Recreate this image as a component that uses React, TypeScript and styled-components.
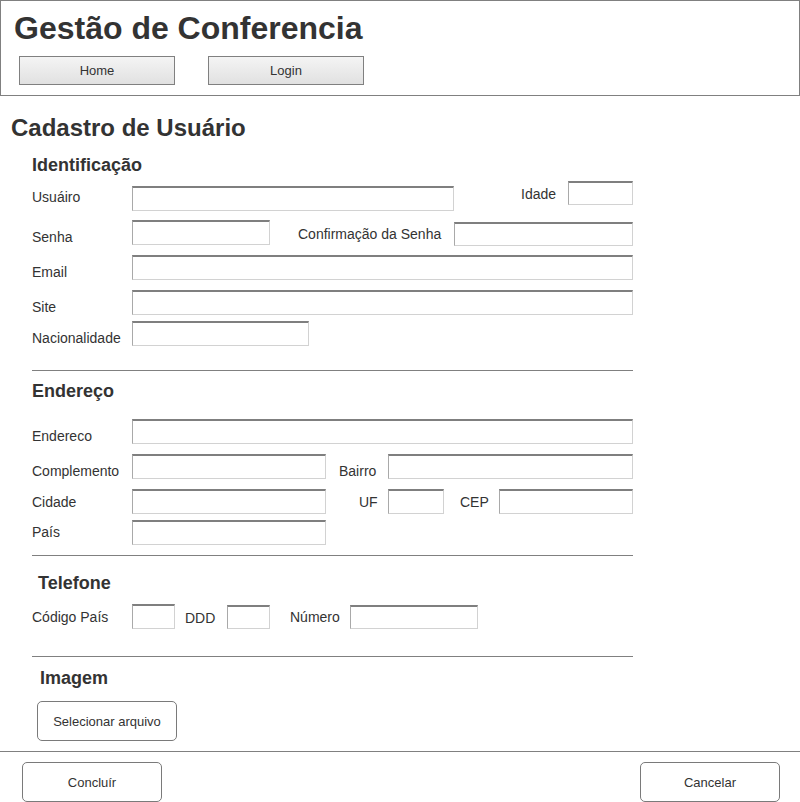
import React from "react";
import styled, { createGlobalStyle } from "styled-components";

const GlobalStyle = createGlobalStyle`
  html, body {
    margin: 0;
    padding: 0;
    overflow: hidden;
    background: #ffffff;
  }
  body {
    font-family: "Liberation Sans", Arial, Helvetica, sans-serif;
    color: #333333;
  }
  * { box-sizing: border-box; }
`;

const Page = styled.div`
  width: 800px;
  height: 802px;
  display: flex;
  flex-direction: column;
`;

const Header = styled.header`
  width: 800px;
  height: 96px;
  border: 1px solid #808080;
  padding: 9px 0 0 13px;
`;

const AppTitle = styled.h1`
  margin: 0;
  font-size: 32px;
  line-height: 36px;
  font-weight: bold;
  color: #333333;
`;

const Nav = styled.nav`
  display: flex;
  gap: 33px;
  margin-top: 10px;
  padding-left: 5px;
`;

const NavButton = styled.button`
  width: 156px;
  height: 29px;
  border: 1px solid #808080;
  background: linear-gradient(#f4f4f4, #e1e1e1);
  font-family: inherit;
  font-size: 13px;
  color: #333333;
  padding: 0;
`;

const Main = styled.main`
  flex: 1;
  display: flex;
  flex-direction: column;
`;

const PageTitle = styled.h2`
  margin: 18px 0 0 11px;
  font-size: 24px;
  line-height: 28px;
  font-weight: bold;
  color: #333333;
`;

const Form = styled.div`
  padding-left: 32px;
  width: 633px;
  display: flex;
  flex-direction: column;
`;

const SectionTitle = styled.h3<{ $mt: number; $ml?: number }>`
  margin: ${(p) => p.$mt}px 0 0 ${(p) => p.$ml ?? 0}px;
  font-size: 18px;
  line-height: 20px;
  font-weight: bold;
  color: #333333;
`;

const Row = styled.div<{ $mt: number }>`
  display: flex;
  align-items: flex-start;
  margin-top: ${(p) => p.$mt}px;
`;

const Label = styled.label<{ $w: number; $mt: number; $ml?: number }>`
  flex: none;
  width: ${(p) => p.$w}px;
  margin-top: ${(p) => p.$mt}px;
  margin-left: ${(p) => p.$ml ?? 0}px;
  font-size: 14px;
  line-height: 16px;
  color: #333333;
  white-space: nowrap;
`;

const Field = styled.input<{ $w: number; $h?: number; $mt?: number }>`
  flex: none;
  width: ${(p) => p.$w}px;
  height: ${(p) => p.$h ?? 25}px;
  margin: ${(p) => p.$mt ?? 0}px 0 0 0;
  padding: 0 4px;
  background: #ffffff;
  border-style: solid;
  border-width: 2px 1px 1px 1px;
  border-color: #7f7f7f #d2d2d2 #d2d2d2 #a9a9a9;
  font-family: inherit;
  font-size: 14px;
  outline: none;
`;

const Divider = styled.hr<{ $mt: number }>`
  margin: ${(p) => p.$mt}px 0 0 0;
  border: none;
  border-top: 1px solid #808080;
  height: 0;
  width: 601px;
`;

const FullDivider = styled.hr<{ $mt: number }>`
  margin: ${(p) => p.$mt}px 0 0 0;
  border: none;
  border-top: 1px solid #808080;
  height: 0;
  width: 800px;
`;

const RoundButton = styled.button<{ $mt?: number; $ml?: number }>`
  width: 140px;
  height: 40px;
  margin: ${(p) => p.$mt ?? 0}px 0 0 ${(p) => p.$ml ?? 0}px;
  border: 1px solid #7a7a7a;
  border-radius: 5px;
  background: #ffffff;
  font-family: inherit;
  font-size: 13px;
  color: #333333;
  padding: 0;
  align-self: flex-start;
`;

const Footer = styled.footer`
  display: flex;
  justify-content: space-between;
  padding: 10px 20px 0 22px;
`;

export default function App() {
  return (
    <Page>
      <GlobalStyle />
      <Header>
        <AppTitle>Gestão de Conferencia</AppTitle>
        <Nav>
          <NavButton>Home</NavButton>
          <NavButton>Login</NavButton>
        </Nav>
      </Header>
      <Main>
        <PageTitle>Cadastro de Usuário</PageTitle>
        <Form>
          <SectionTitle $mt={13}>Identificação</SectionTitle>
          <Row $mt={6}>
            <Label $w={100} $mt={8}>Usuáiro</Label>
            <Field $w={322} $mt={5} />
            <Label $w={47} $mt={5} $ml={67}>Idade</Label>
            <Field $w={65} $h={24} />
          </Row>
          <Row $mt={9}>
            <Label $w={100} $mt={9}>Senha</Label>
            <Field $w={138} />
            <Label $w={156} $mt={6} $ml={28}>Confirmação da Senha</Label>
            <Field $w={179} $h={24} $mt={2} />
          </Row>
          <Row $mt={9}>
            <Label $w={100} $mt={9}>Email</Label>
            <Field $w={501} />
          </Row>
          <Row $mt={10}>
            <Label $w={100} $mt={9}>Site</Label>
            <Field $w={501} />
          </Row>
          <Row $mt={6}>
            <Label $w={100} $mt={9}>Nacionalidade</Label>
            <Field $w={177} />
          </Row>
          <Divider $mt={24} />

          <SectionTitle $mt={10}>Endereço</SectionTitle>
          <Row $mt={18}>
            <Label $w={100} $mt={9}>Endereco</Label>
            <Field $w={501} />
          </Row>
          <Row $mt={10}>
            <Label $w={100} $mt={9}>Complemento</Label>
            <Field $w={194} />
            <Label $w={49} $mt={9} $ml={13}>Bairro</Label>
            <Field $w={245} />
          </Row>
          <Row $mt={10}>
            <Label $w={100} $mt={5}>Cidade</Label>
            <Field $w={194} />
            <Label $w={29} $mt={5} $ml={33}>UF</Label>
            <Field $w={56} />
            <Label $w={39} $mt={5} $ml={16}>CEP</Label>
            <Field $w={134} />
          </Row>
          <Row $mt={6}>
            <Label $w={100} $mt={4}>País</Label>
            <Field $w={194} />
          </Row>
          <Divider $mt={10} />

          <SectionTitle $mt={17} $ml={6}>Telefone</SectionTitle>
          <Row $mt={11}>
            <Label $w={100} $mt={5}>Código País</Label>
            <Field $w={43} />
            <Label $w={42} $mt={6} $ml={10}>DDD</Label>
            <Field $w={43} $h={24} $mt={1} />
            <Label $w={60} $mt={5} $ml={20}>Número</Label>
            <Field $w={128} $h={24} $mt={1} />
          </Row>
          <Divider $mt={27} />

          <SectionTitle $mt={11} $ml={8}>Imagem</SectionTitle>
          <RoundButton $mt={13} $ml={5}>Selecionar arquivo</RoundButton>
        </Form>
        <FullDivider $mt={10} />
        <Footer>
          <RoundButton>Concluír</RoundButton>
          <RoundButton>Cancelar</RoundButton>
        </Footer>
      </Main>
    </Page>
  );
}
